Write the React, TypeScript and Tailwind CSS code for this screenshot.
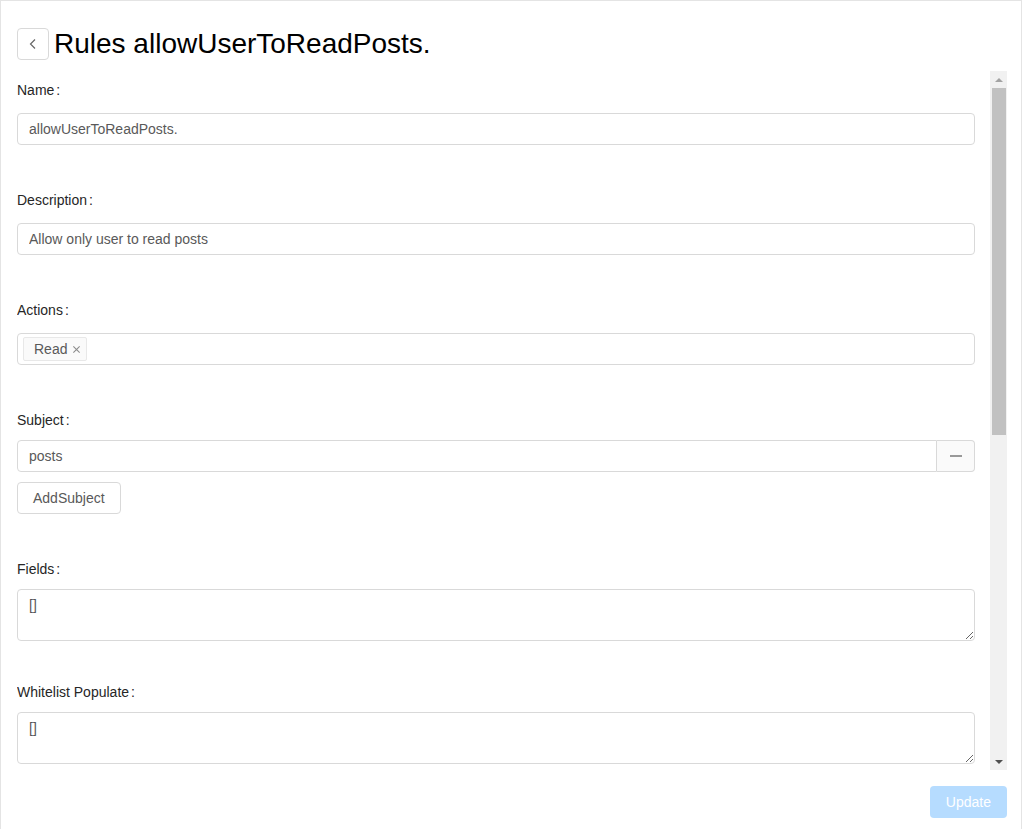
import React from "react";

function Label({ text, mb }: { text: string; mb: string }) {
  return (
    <div className={`h-[22px] leading-[22px] text-[14px] text-[#262626] ${mb}`}>
      {text}
      <span className="ml-[2px]">:</span>
    </div>
  );
}

function TextInput({ value }: { value: string }) {
  return (
    <input
      readOnly
      value={value}
      className="block w-full h-[32px] border border-[#d9d9d9] rounded-[4px] px-[11px] text-[14px] text-[#595959] bg-white outline-none"
    />
  );
}

function TextArea({ value }: { value: string }) {
  return (
    <textarea
      readOnly
      value={value}
      className="block w-full h-[52px] border border-[#d9d9d9] rounded-[4px] px-[11px] py-[4px] leading-[22px] text-[14px] text-[#595959] bg-white outline-none"
    />
  );
}

function ScrollBar() {
  return (
    <div className="w-[17px] h-full bg-[#f1f1f1] flex flex-col shrink-0">
      <div className="h-[17px] flex items-center justify-center">
        <div className="w-0 h-0 border-l-[4px] border-r-[4px] border-b-[4px] border-l-transparent border-r-transparent border-b-[#a3a3a3]" />
      </div>
      <div className="flex-1 px-[2px] pr-[1px]">
        <div className="h-[347px] bg-[#c1c1c1]" />
      </div>
      <div className="h-[17px] flex items-center justify-center">
        <div className="w-0 h-0 border-l-[4px] border-r-[4px] border-t-[4px] border-l-transparent border-r-transparent border-t-[#505050]" />
      </div>
    </div>
  );
}

export default function App() {
  return (
    <div
      className="w-[1022px] h-[829px] border border-b-0 border-[#e4e4e4] bg-white pt-[27px] pl-[16px] pr-[14px] flex flex-col"
      style={{ fontFamily: '"Liberation Sans", Arial, sans-serif' }}
    >
      <div className="flex items-center h-[32px] gap-[5px]">
        <button className="w-[32px] h-[32px] border border-[#d9d9d9] rounded-[4px] bg-white flex items-center justify-center text-[#595959]">
          <svg width="12" height="12" viewBox="0 0 12 12" fill="none">
            <path d="M8 1.5L3.5 6L8 10.5" stroke="#666" strokeWidth="1.2" />
          </svg>
        </button>
        <h1 className="text-[28px] leading-[32px] text-black font-normal">Rules allowUserToReadPosts.</h1>
      </div>

      <div className="mt-[11px] h-[699px] flex">
        <div className="flex-1 min-w-0 h-full overflow-hidden pr-[15px] pt-[8px]">
          <Label text="Name" mb="mb-[12px]" />
          <TextInput value="allowUserToReadPosts." />

          <div className="h-[44px]" />
          <Label text="Description" mb="mb-[12px]" />
          <TextInput value="Allow only user to read posts" />

          <div className="h-[44px]" />
          <Label text="Actions" mb="mb-[12px]" />
          <div className="h-[32px] border border-[#d9d9d9] rounded-[4px] bg-white flex items-center pl-[5px]">
            <span className="h-[24px] border border-[#e8e8e8] bg-[#fafafa] rounded-[2px] pl-[10px] pr-[5px] flex items-center text-[14px] text-[#595959]">
              Read
              <svg className="ml-[5px]" width="9" height="9" viewBox="0 0 10 10">
                <path d="M1.5 1.5L8.5 8.5M8.5 1.5L1.5 8.5" stroke="#8c8c8c" strokeWidth="1.2" />
              </svg>
            </span>
          </div>

          <div className="h-[44px]" />
          <Label text="Subject" mb="mb-[9px]" />
          <div className="flex h-[32px]">
            <input
              readOnly
              value="posts"
              className="flex-1 min-w-0 h-[32px] border border-[#d9d9d9] rounded-l-[4px] px-[11px] text-[14px] text-[#595959] bg-white outline-none"
            />
            <div className="w-[38px] h-[32px] border border-l-0 border-[#d9d9d9] rounded-r-[4px] bg-[#fafafa] flex items-center justify-center">
              <div className="w-[12px] h-[2px] bg-[#999]" />
            </div>
          </div>
          <button className="mt-[10px] h-[32px] px-[15px] border border-[#d9d9d9] rounded-[4px] bg-white text-[14px] text-[#595959]">
            AddSubject
          </button>

          <div className="h-[44px]" />
          <Label text="Fields" mb="mb-[9px]" />
          <TextArea value="[]" />

          <div className="h-[40px]" />
          <Label text="Whitelist Populate" mb="mb-[9px]" />
          <TextArea value="[]" />
        </div>
        <ScrollBar />
      </div>

      <div className="flex justify-end pt-[16px]">
        <button className="h-[32px] px-[16px] rounded-[4px] bg-[#b6dcff] text-white text-[14px]">
          Update
        </button>
      </div>
    </div>
  );
}
